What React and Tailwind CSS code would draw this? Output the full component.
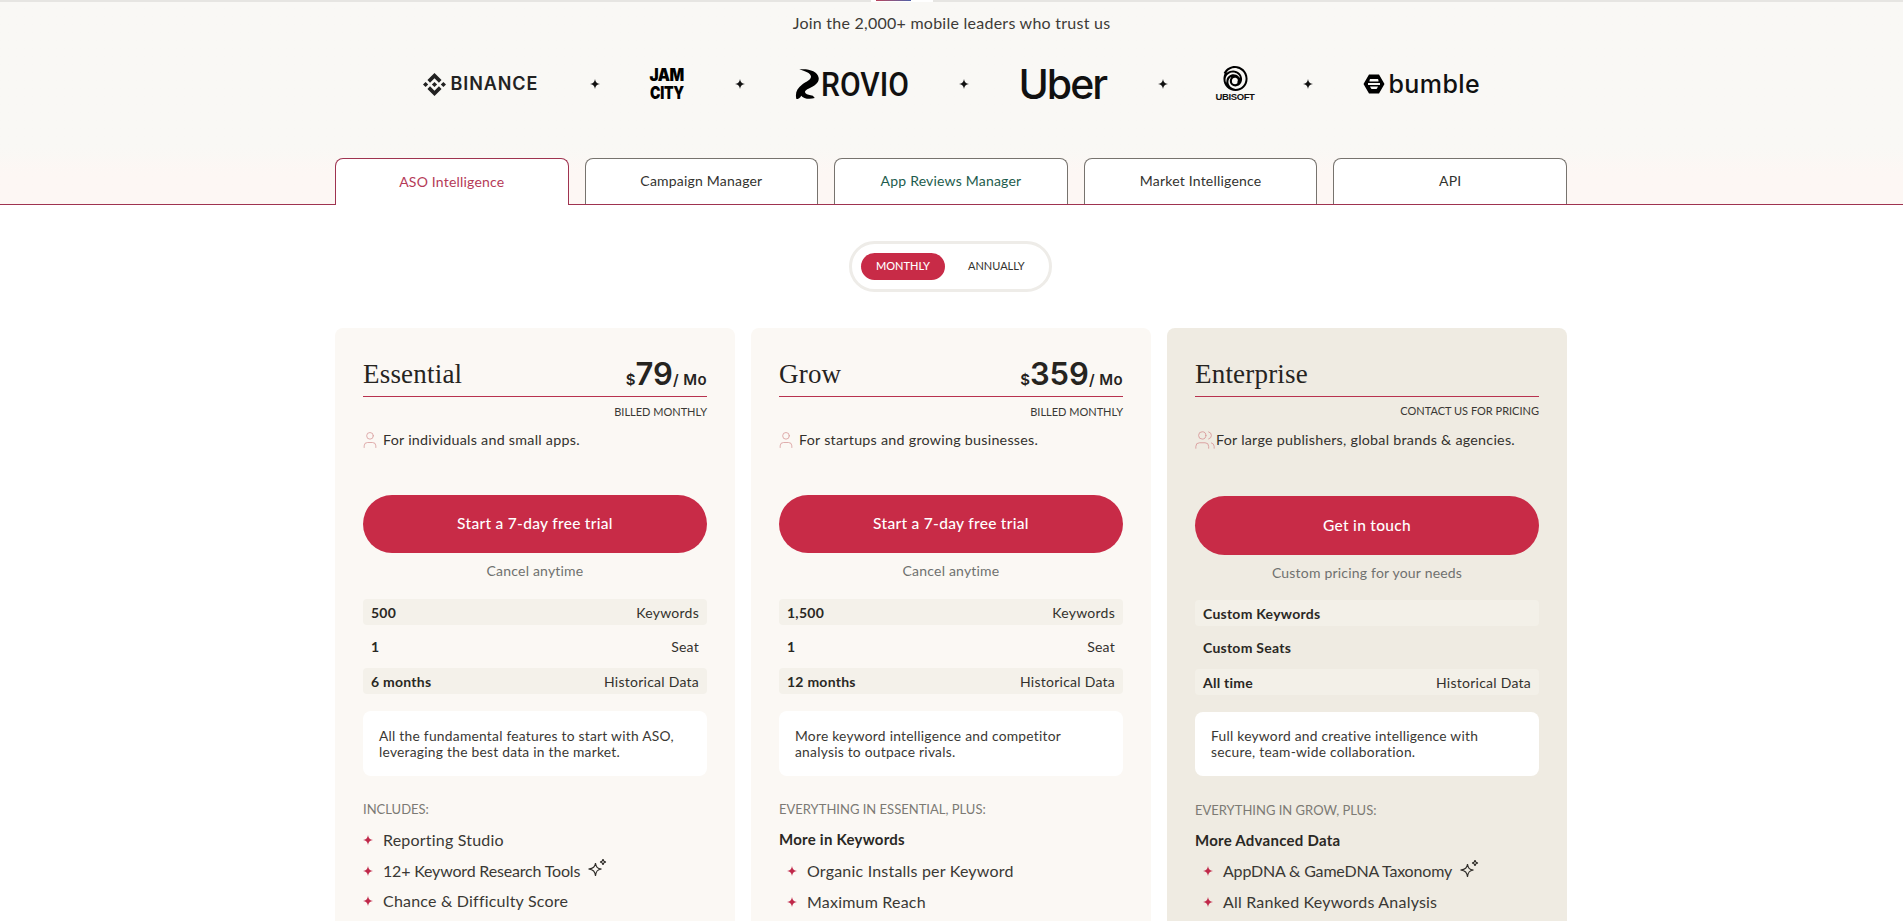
import React from "react";
import { User, Users } from "lucide-react";
import { SiBinance, SiUbisoft } from "react-icons/si";

const PLANS = [
  {
    name: "Essential",
    price: "79",
    billed: "BILLED MONTHLY",
    icon: User,
    audience: "For individuals and small apps.",
    cta: "Start a 7-day free trial",
    note: "Cancel anytime",
    stats: [
      ["500", "Keywords"],
      ["1", "Seat"],
      ["6 months", "Historical Data"],
    ],
    blurb: ["All the fundamental features to start with ASO,", "leveraging the best data in the market."],
    listTitle: "INCLUDES:",
    features: [
      ["Reporting Studio"],
      ["12+ Keyword Research Tools", true],
      ["Chance & Difficulty Score"],
    ],
  },
  {
    name: "Grow",
    price: "359",
    billed: "BILLED MONTHLY",
    icon: User,
    audience: "For startups and growing businesses.",
    cta: "Start a 7-day free trial",
    note: "Cancel anytime",
    stats: [
      ["1,500", "Keywords"],
      ["1", "Seat"],
      ["12 months", "Historical Data"],
    ],
    blurb: ["More keyword intelligence and competitor", "analysis to outpace rivals."],
    listTitle: "EVERYTHING IN ESSENTIAL, PLUS:",
    group: "More in Keywords",
    features: [["Organic Installs per Keyword"], ["Maximum Reach"]],
  },
  {
    name: "Enterprise",
    enterprise: true,
    billed: "CONTACT US FOR PRICING",
    icon: Users,
    audience: "For large publishers, global brands & agencies.",
    cta: "Get in touch",
    note: "Custom pricing for your needs",
    stats: [
      ["Custom Keywords", ""],
      ["Custom Seats", ""],
      ["All time", "Historical Data"],
    ],
    blurb: ["Full keyword and creative intelligence with", "secure, team-wide collaboration."],
    listTitle: "EVERYTHING IN GROW, PLUS:",
    group: "More Advanced Data",
    features: [["AppDNA & GameDNA Taxonomy", true], ["All Ranked Keywords Analysis"]],
  },
];

const TABS = [
  { label: "ASO Intelligence", className: "h-[47px] text-[#b53a57] border-[#9f3350] bg-white" },
  { label: "Campaign Manager", className: "h-[46px] text-[#33332f] border-[#77736e] bg-white" },
  { label: "App Reviews Manager", className: "h-[46px] text-[#1d5c4d] border-[#77736e] bg-white" },
  { label: "Market Intelligence", className: "h-[46px] text-[#33332f] border-[#77736e] bg-white" },
  { label: "API", className: "h-[46px] text-[#33332f] border-[#77736e] bg-white" },
];

function Star({ className }) {
  return (
    <svg viewBox="0 0 10 10" className={className} fill="currentColor">
      <path d="M5 0 C5.4 3.2 6.8 4.6 10 5 C6.8 5.4 5.4 6.8 5 10 C4.6 6.8 3.2 5.4 0 5 C3.2 4.6 4.6 3.2 5 0Z" />
    </svg>
  );
}

function Sparkle() {
  return (
    <svg viewBox="0 0 20 20" className="w-[21px] h-[20px] -mt-[5px] -ml-[3px]" fill="none" stroke="#2f2d29" strokeWidth="1.1">
      <path d="M8 5 C8.6 9 9.6 10.4 14 11 C9.6 11.6 8.6 13.4 8 18 C7.4 13.4 6 11.6 1 11 C6 10.4 7.4 9 8 5Z" />
      <path d="M15.5 1 C15.7 3.2 16.4 3.8 18.5 4 C16.4 4.2 15.7 4.9 15.5 7 C15.3 4.9 14.6 4.2 12.5 4 C14.6 3.8 15.3 3.2 15.5 1Z" />
    </svg>
  );
}

function Logos() {
  const dot = <Star className="w-2.5 h-2.5 text-[#111] shrink-0" />;
  return (
    <div className="flex items-center justify-center gap-[50px] h-[36px] mt-[31px] text-[#111]">
      <div className="flex items-center gap-[5px] w-[117px]">
        <SiBinance className="w-[23px] h-[23px] shrink-0 text-[#222]" />
        <span className="font-['Inter',sans-serif] font-semibold text-[18px] tracking-[0.9px] text-[#222] leading-none">BINANCE</span>
      </div>
      {dot}
      <div className="flex flex-col items-center w-[35px] font-['Inter',sans-serif] leading-none text-black">
        <span className="text-[14px] font-black tracking-[-0.5px] scale-y-[1.2] scale-x-[1.1]">JAM</span>
        <span className="text-[14px] font-black tracking-[-0.3px] scale-y-[1.2] mt-[4px]">CITY</span>
      </div>
      {dot}
      <div className="flex items-center w-[114px] h-[30px]">
        <svg viewBox="0 0 26 32" className="w-[26px] h-[31px] shrink-0" fill="#000">
          <path d="M4 0.5 C13 -0.5 23 2 24 9 C24.8 14 20 17.5 14 20 C10.5 21.5 9 23 10.5 25 C12 27 15 26.5 18 27.5 L20 30 C14 31.5 8 30.5 6 27.5 C5 30 3 31 1 31 C-0.5 25 1.5 20 7 16 C12 12.5 16.5 11 16 7.5 C15.5 4 10 2 4 0.5Z" />
        </svg>
        <span className="font-['Roboto',sans-serif] font-medium text-[33px] leading-none scale-x-[0.91] origin-left">ROVIO</span>
      </div>
      {dot}
      <span className="font-['Inter',sans-serif] font-medium text-[41px] tracking-[-2px] leading-none w-[89px]">Uber</span>
      {dot}
      <div className="flex flex-col items-center w-[35px]">
        <SiUbisoft className="w-[25px] h-[25px] text-black" />
        <span className="font-['Liberation_Sans',sans-serif] font-bold text-[9.5px] tracking-[-0.4px] leading-none mt-[1px]">UBISOFT</span>
      </div>
      {dot}
      <div className="flex items-center gap-[4px] w-[118px]">
        <svg viewBox="0 0 22 20" className="w-[22px] h-[20px] shrink-0" fill="#000">
          <path fillRule="evenodd" d="M6 0.5 H16 L21.5 10 L16 19.5 H6 L0.5 10Z M7 5 C6.5 6 6.5 6.8 6.5 7.5 H15.5 C15.5 6.8 15.5 6 15 5Z M5 9 V11 H17 V9Z M7 12.5 C7.5 13.5 8 14.5 8.5 15 H13.5 C14 14.5 14.5 13.5 15 12.5Z" />
        </svg>
        <span className="font-['Inter',sans-serif] font-medium text-[25px] leading-none tracking-[0.4px]">bumble</span>
      </div>
    </div>
  );
}

function PlanCard({ plan }) {
  const Icon = plan.icon;
  const ent = plan.enterprise;
  return (
    <div className={`rounded-lg px-7 pt-7 pb-10 ${ent ? "bg-[#efebe2]" : "bg-[#fbf8f4]"}`}>
      <div className="flex items-end justify-between h-[41px] border-b border-[#b8324f]">
        <h3 className="font-['Liberation_Serif',serif] text-[27px] leading-[36px] pb-1 text-[#26241f] tracking-[0.2px]">{plan.name}</h3>
        {plan.price && (
          <p className="font-['Inter',sans-serif] font-semibold text-[#26241f] text-[15px] leading-[32px] whitespace-nowrap">
            $<span className="text-[31px]">{plan.price}</span>
            <span className="tracking-[0.4px]">/ Mo</span>
          </p>
        )}
      </div>
      <p className={`text-right text-[11px] leading-4 text-[#3a3834] ${ent ? "mt-[6px]" : "mt-[7px]"}`}>{plan.billed}</p>
      <div className={`flex items-center h-5 text-[14.3px] text-[#33312d] tracking-[0.25px] ${ent ? "mt-[11px]" : "mt-[10px] gap-[3px]"}`}>
        <Icon className={`text-[#d99d9d] shrink-0 ${ent ? "w-[22px] h-[22px] -ml-px" : "w-5 h-5 -ml-[3px]"}`} strokeWidth={1} />
        {plan.audience}
      </div>
      <button className={`w-full rounded-full bg-[#c82b47] text-white text-[15.5px] font-medium tracking-[0.3px] ${ent ? "h-[59px] mt-[46px]" : "h-[58px] mt-[45px]"}`}>
        {plan.cta}
      </button>
      <p className="text-center text-[14px] leading-5 text-[#6f716f] tracking-[0.2px] mt-2">{plan.note}</p>
      <div className={`flex flex-col gap-[8.5px] text-[14px] text-[#33312d] tracking-[0.25px] ${ent ? "mt-[17px]" : "mt-[18px]"}`}>
        {plan.stats.map(([value, label], i) => (
          <div key={value} className={`flex items-center justify-between h-[26px] px-2 rounded ${i % 2 === 0 ? (ent ? "bg-[#f3f0e8]" : "bg-[#f4f1ea]") : ""}`}>
            <span className="font-bold text-[#2a2824]">{value}</span>
            <span>{label}</span>
          </div>
        ))}
      </div>
      <div className={`rounded-lg bg-white px-4 flex flex-col justify-center text-[13.8px] leading-4 text-[#3a3834] tracking-[0.25px] mt-[17px] ${ent ? "h-16" : "h-[65px]"}`}>
        {plan.blurb.map((line) => (
          <span key={line}>{line}</span>
        ))}
      </div>
      <p className={`text-[13px] leading-5 text-[#7c7a74] ${ent ? "mt-6" : "mt-[23px]"}`}>{plan.listTitle}</p>
      {plan.group && <p className="font-bold text-[15px] leading-6 text-[#2a2824] tracking-[0.25px] mt-[8px]">{plan.group}</p>}
      <ul className={`flex flex-col gap-[6.5px] text-[16px] text-[#3a3834] tracking-[0.2px] ${plan.group ? (ent ? "ml-2 mt-[7px]" : "ml-2 mt-[8px]") : "mt-[9px]"}`}>
        {plan.features.map(([text, sparkle]) => (
          <li key={text} className="flex items-center h-6 gap-[10px]">
            <Star className="w-2.5 h-2.5 text-[#c0294a] shrink-0" />
            <span className={sparkle ? "tracking-[-0.18px]" : ""}>{text}</span>
            {sparkle && <Sparkle />}
          </li>
        ))}
      </ul>
    </div>
  );
}

export default function App() {
  return (
    <div className="h-[921px] overflow-hidden bg-white font-['Lato',sans-serif] relative">
      {/* Top sliver of the floating nav */}
      <div className="absolute top-0 left-[871px] w-[62px] h-[2px] bg-white z-10 pl-[5px]">
        <div className="w-[35px] h-px bg-gradient-to-r from-[#b8405a] to-[#4a5fa8]" />
      </div>

      <div className="h-[205px] border-b border-[#9f3350] bg-gradient-to-b from-[#f9f8f5] from-[72%] to-[#fdf7f4] to-[85%] border-t-2 border-t-[#e6e5e2]">
        <p className="text-center text-[16px] leading-6 text-[#3d3b37] tracking-[0.25px] mt-[9px]">Join the 2,000+ mobile leaders who trust us</p>
        <Logos />
        <div className="grid grid-cols-5 gap-4 w-[1232px] ml-[335px] mt-[56px] items-start">
          {TABS.map((tab) => (
            <div key={tab.label} className={`flex items-center justify-center border border-b-0 rounded-t-lg text-[14px] tracking-[0.2px] pb-[2px] ${tab.className}`}>
              {tab.label}
            </div>
          ))}
        </div>
      </div>

      <div className="flex justify-center mt-9 pr-[2px]">
        <div className="flex items-center gap-[9px] h-[51px] w-[203px] rounded-full border-[3px] border-[#eeece8] bg-white pl-[9px]">
          <span className="flex items-center justify-center w-[84px] h-[27px] rounded-full bg-[#c82b47] text-white text-[11px] font-medium">MONTHLY</span>
          <span className="text-[11px] text-[#33312d] ml-[14px]">ANNUALLY</span>
        </div>
      </div>

      <div className="grid grid-cols-3 gap-4 w-[1232px] ml-[335px] mt-[36px]">
        {PLANS.map((plan) => (
          <PlanCard key={plan.name} plan={plan} />
        ))}
      </div>
    </div>
  );
}
